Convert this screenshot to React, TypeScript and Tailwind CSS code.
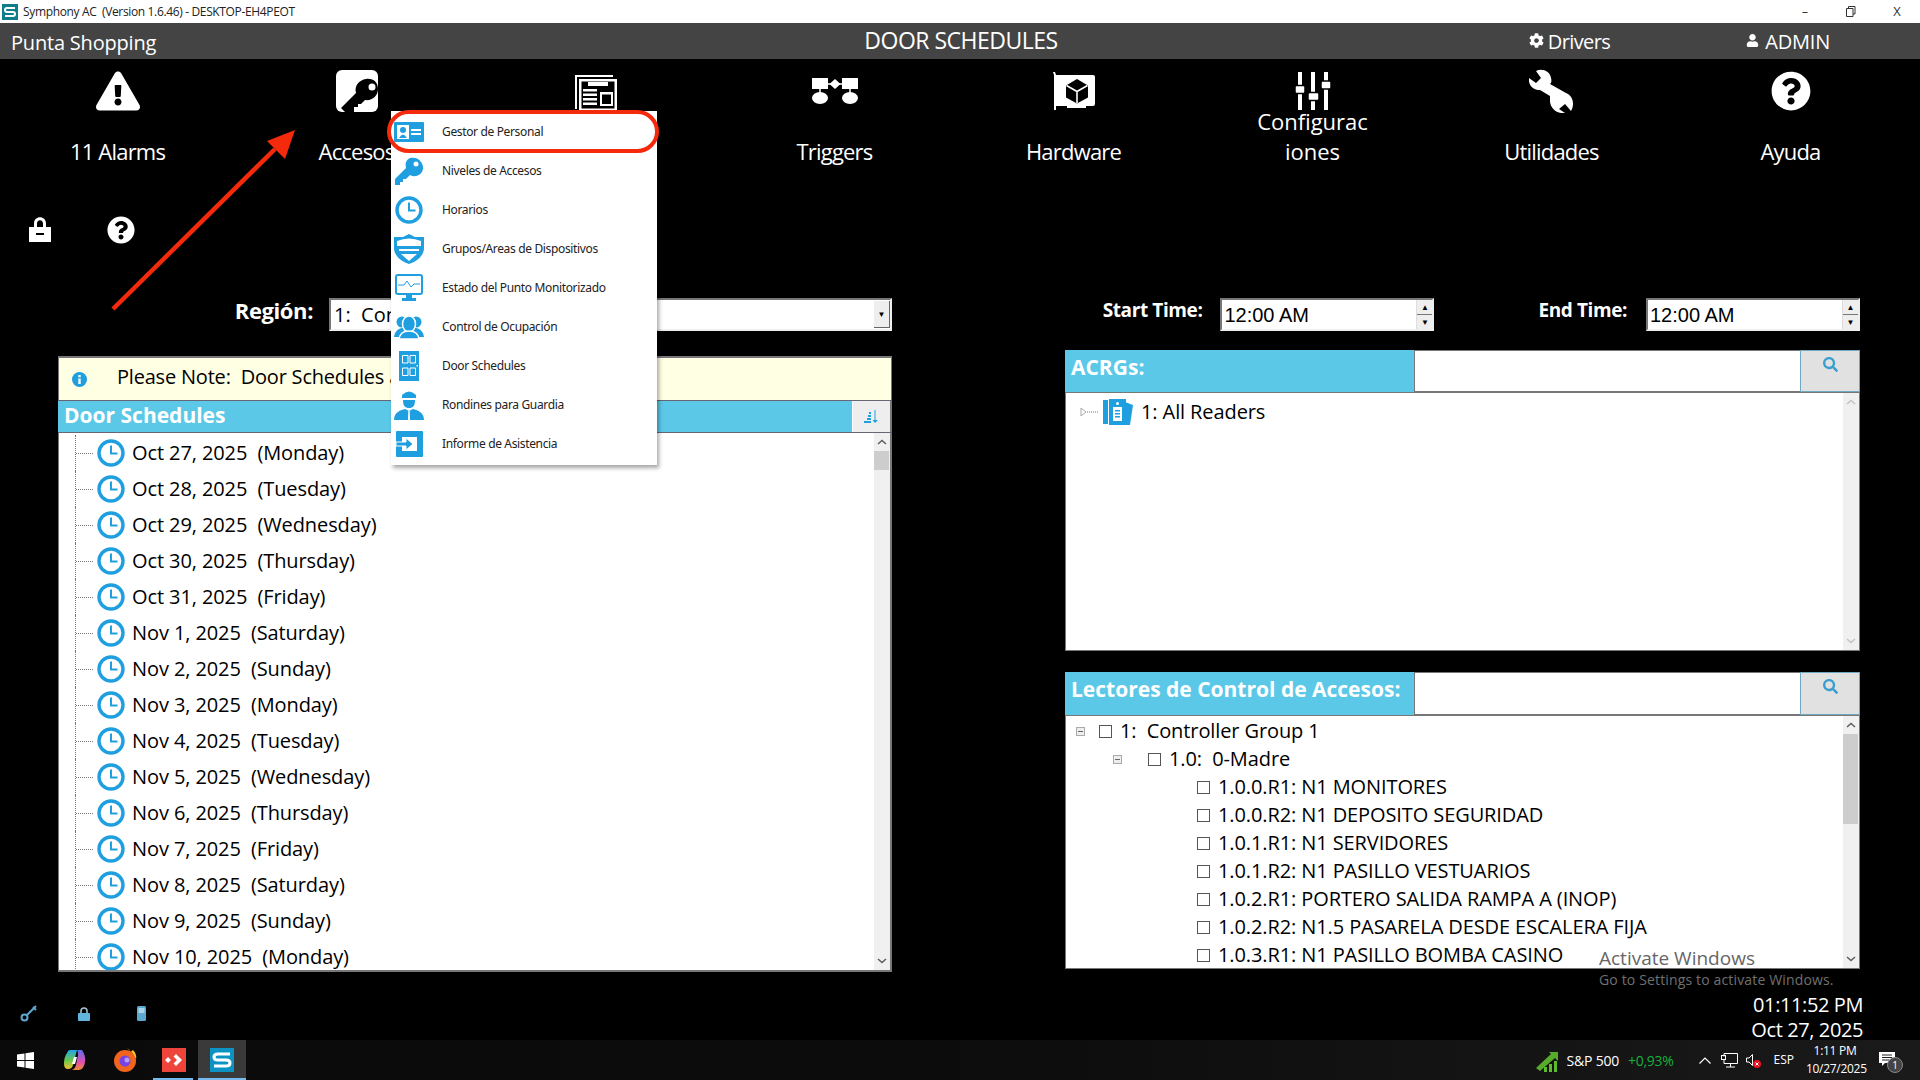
import React from "react";
import { FaExclamationTriangle, FaQuestionCircle, FaCog, FaUser, FaSearch } from "react-icons/fa";

const BLUE = "#1f9fe0";

const scheduleDays = [
  "Oct 27, 2025  (Monday)",
  "Oct 28, 2025  (Tuesday)",
  "Oct 29, 2025  (Wednesday)",
  "Oct 30, 2025  (Thursday)",
  "Oct 31, 2025  (Friday)",
  "Nov 1, 2025  (Saturday)",
  "Nov 2, 2025  (Sunday)",
  "Nov 3, 2025  (Monday)",
  "Nov 4, 2025  (Tuesday)",
  "Nov 5, 2025  (Wednesday)",
  "Nov 6, 2025  (Thursday)",
  "Nov 7, 2025  (Friday)",
  "Nov 8, 2025  (Saturday)",
  "Nov 9, 2025  (Sunday)",
  "Nov 10, 2025  (Monday)",
];

const readers = [
  "1.0.0.R1: N1 MONITORES",
  "1.0.0.R2: N1 DEPOSITO SEGURIDAD",
  "1.0.1.R1: N1 SERVIDORES",
  "1.0.1.R2: N1 PASILLO VESTUARIOS",
  "1.0.2.R1: PORTERO SALIDA RAMPA A (INOP)",
  "1.0.2.R2: N1.5 PASARELA DESDE ESCALERA FIJA",
  "1.0.3.R1: N1 PASILLO BOMBA CASINO",
];

function ClockIcon({ size = 28 }: { size?: number }) {
  return (
    <svg width={size} height={size} viewBox="0 0 28 28" className="shrink-0">
      <circle cx="14" cy="14" r="12" fill="white" stroke={BLUE} strokeWidth="3.4" />
      <path d="M14 6.500V14.500H20.500" fill="none" stroke={BLUE} strokeWidth="2" />
    </svg>
  );
}

function KeyTile() {
  return (
    <svg width="42" height="42" viewBox="0 0 42 42">
      <rect width="42" height="42" rx="6" fill="white" />
      <path d="M30 9C37 8 42 12 42 19C42 26 36 31 29 30L25 34H22V37H18V42H9L5 38L20 23C18 16 23 10 30 9Z" fill="black" />
      <circle cx="36" cy="17" r="3.500" fill="white" />
    </svg>
  );
}

function NewsIcon() {
  return (
    <svg width="42" height="36" viewBox="0 0 42 36" fill="white" className="mt-1">
      <path d="M0 0H38V2H2V34H0Z" />
      <path d="M4 4H42V36H4ZM6.500 6.500V33.500H39.500V6.500Z" fillRule="evenodd" />
      <rect x="13" y="7" width="20" height="4" />
      <rect x="8" y="14" width="14" height="2.500" />
      <rect x="8" y="18.500" width="14" height="2.500" />
      <rect x="8" y="23" width="14" height="2.500" />
      <rect x="8" y="27.500" width="14" height="2.500" />
      <path d="M25 17H38V31H25ZM27 19.500V29H36V19.500Z" fillRule="evenodd" />
    </svg>
  );
}

function TriggerIcon() {
  return (
    <svg width="46" height="26" viewBox="0 0 46 26" fill="white">
      <rect x="0" y="0" width="16" height="11" />
      <rect x="30" y="0" width="16" height="11" />
      <path d="M16 6H30M8 11V15M38 11V15" stroke="white" strokeWidth="1.500" />
      <path d="M23 1L28.500 6L23 11L17.500 6Z" />
      <ellipse cx="8" cy="20" rx="8" ry="6" />
      <ellipse cx="38" cy="20" rx="8" ry="6" />
    </svg>
  );
}

function HardwareIcon() {
  return (
    <svg width="42" height="38" viewBox="0 0 42 38">
      <path d="M0 0H2L3 3H40Q42 3 42 5V32Q42 34 40 34H33V36H14V34H3V38H1V3Z" fill="white" />
      <path d="M24 7L35 13.500V25.500L24 31.500L13 25.500V13.500Z" fill="black" />
      <path d="M13.500 13.500L24 19.500L34.500 13.500M24 19.500V31" fill="none" stroke="white" strokeWidth="1.600" />
    </svg>
  );
}

function SlidersIcon() {
  return (
    <svg width="36" height="38" viewBox="0 0 36 38" fill="white">
      <rect x="3" y="0" width="4" height="38" />
      <rect x="16" y="0" width="4" height="38" />
      <rect x="29" y="0" width="4" height="38" />
      <rect x="0" y="13.500" width="10" height="8" rx="1.500" stroke="black" strokeWidth="1.500" />
      <rect x="13" y="20.500" width="11" height="8" rx="1.500" stroke="black" strokeWidth="1.500" />
      <rect x="26" y="9" width="10" height="8" rx="1.500" stroke="black" strokeWidth="1.500" />
    </svg>
  );
}

function WrenchIcon() {
  return (
    <svg width="45" height="44" viewBox="0 0 45 44" fill="white">
      <path d="M0 9L7 14L12 9L7 2C13 -1 21 2 22 9C23 12 22 14 21 15L37 24C44 27 46 35 42 42L36 35L30 40L36 44C28 45 22 40 21 33L21 27L11 21C4 21 -1 16 0 9Z" />
    </svg>
  );
}

function LockIcon({ width, height }: { width: number; height: number }) {
  return (
    <svg width={width} height={height} viewBox="0 0 22 26" fill="white">
      <path d="M5 11V7.500C5 -1 17 -1 17 7.500V11H14V7.500C14 3 8 3 8 7.500V11Z" />
      <path d="M0 11H22V26H0ZM7 17V19H15V17Z" fillRule="evenodd" />
    </svg>
  );
}

const navItems: { id: string; label: string; icon: React.ReactNode; wrap?: boolean }[] = [
  { id: "alarms", label: "11 Alarms", icon: <FaExclamationTriangle size={44} color="white" /> },
  { id: "access", label: "Accesos", icon: <KeyTile /> },
  { id: "reports", label: "", icon: <NewsIcon /> },
  { id: "triggers", label: "Triggers", icon: <TriggerIcon /> },
  { id: "hardware", label: "Hardware", icon: <HardwareIcon /> },
  { id: "config", label: "Configuraciones", icon: <SlidersIcon />, wrap: true },
  { id: "utils", label: "Utilidades", icon: <WrenchIcon /> },
  { id: "help", label: "Ayuda", icon: <FaQuestionCircle size={40} color="white" /> },
];

const menuItems: { label: string; icon: React.ReactNode }[] = [
  {
    label: "Gestor de Personal",
    icon: (
      <svg width="30" height="20" viewBox="0 0 30 20">
        <rect width="30" height="20" rx="1" fill={BLUE} />
        <rect x="3" y="3" width="12" height="14" fill="white" />
        <circle cx="9" cy="8" r="3" fill={BLUE} />
        <path d="M5 16Q9 9 13 16Z" fill={BLUE} />
        <rect x="17" y="7" width="10" height="2" fill="white" />
        <rect x="17" y="11" width="10" height="2" fill="white" />
      </svg>
    ),
  },
  {
    label: "Niveles de Accesos",
    icon: (
      <svg width="30" height="28" viewBox="0 0 30 28">
        <path d="M16 1C24 -1 30 6 29 12C28 18 21 21 16 18L12 22H9V25H6V28H1V22L12 11C11 6 12 3 16 1Z" fill={BLUE} />
        <circle cx="22" cy="7" r="2.500" fill="white" />
      </svg>
    ),
  },
  { label: "Horarios", icon: <ClockIcon /> },
  {
    label: "Grupos/Areas de Dispositivos",
    icon: (
      <svg width="30" height="30" viewBox="0 0 30 30">
        <path d="M15 0L21 3H30V14C30 22 22 28 15 30C8 28 0 22 0 14V3H9Z" fill={BLUE} />
        <path d="M3 7Q15 2 27 7V12H3Z" fill="white" />
        <path d="M5 15H25V17H5Z M7 20H23L15 27Z" fill="white" />
      </svg>
    ),
  },
  {
    label: "Estado del Punto Monitorizado",
    icon: (
      <svg width="28" height="27" viewBox="0 0 28 27">
        <rect x="1" y="1" width="26" height="19" rx="2" fill="white" stroke={BLUE} strokeWidth="2" />
        <path d="M3 11H9L12 7L16 13L19 10H25" fill="none" stroke={BLUE} strokeWidth="1" />
        <path d="M11 20H17V24H21V27H7V24H11Z" fill={BLUE} />
      </svg>
    ),
  },
  {
    label: "Control de Ocupación",
    icon: (
      <svg width="30" height="24" viewBox="0 0 30 24" fill={BLUE}>
        <circle cx="8" cy="7" r="5.500" />
        <circle cx="22" cy="7" r="5.500" />
        <path d="M0 22C1 14 7 13 9 13H21C23 13 29 14 30 22Z" />
        <ellipse cx="15" cy="9" rx="6.500" ry="8" stroke="white" strokeWidth="1.500" />
        <path d="M5 24C6 17 11 16 15 16C19 16 24 17 25 24Z" stroke="white" strokeWidth="1.500" />
      </svg>
    ),
  },
  {
    label: "Door Schedules",
    icon: (
      <svg width="20" height="30" viewBox="0 0 20 30">
        <rect width="20" height="30" fill={BLUE} />
        <path d="M3.500 4.500H9V12H3.500ZM11 4.500H16.500V12H11ZM3.500 17H9V24.500H3.500ZM11 17H16.500V24.500H11Z" fill="none" stroke="white" strokeWidth="1" />
        <rect x="17.500" y="14" width="1.500" height="1.500" fill="white" />
      </svg>
    ),
  },
  {
    label: "Rondines para Guardia",
    icon: (
      <svg width="30" height="30" viewBox="0 0 30 30" fill={BLUE}>
        <path d="M8 5Q15 -2 22 5V8H8Z" />
        <path d="M9 10H21C21 16 19 18 15 18C11 18 9 16 9 10Z" />
        <path d="M0 30C0 22 7 20 11 19L15 21L19 19C23 20 30 22 30 30Z" />
        <path d="M14.300 21H15.700L16 30H14Z" fill="white" />
      </svg>
    ),
  },
  {
    label: "Informe de Asistencia",
    icon: (
      <svg width="27" height="26" viewBox="0 0 27 26">
        <rect width="27" height="26" rx="1" fill={BLUE} />
        <rect x="6" y="6" width="15" height="14" fill="white" />
        <path d="M0 11H10V7L17 13L10 19V15H0Z" fill={BLUE} stroke="white" strokeWidth="1" />
      </svg>
    ),
  },
];

function UpChevron({ className = "" }: { className?: string }) {
  return (
    <svg width="10" height="6" viewBox="0 0 10 6" className={className}>
      <path d="M1 5L5 1.500L9 5" fill="none" stroke="#606060" strokeWidth="1.600" />
    </svg>
  );
}

function Scrollbar({ thumbTop, thumbHeight, faded }: { thumbTop: string; thumbHeight: string; faded?: boolean }) {
  return (
    <div className="w-4 shrink-0 bg-[#f0f0f0] flex flex-col items-center justify-between py-1.5 relative">
      <UpChevron className={faded ? "opacity-30" : ""} />
      <div className={`absolute left-0 w-[15px] bg-[#cdcdcd] ${thumbTop} ${thumbHeight}`} />
      <UpChevron className={`rotate-180 ${faded ? "opacity-30" : ""}`} />
    </div>
  );
}

function SearchHeader({ title, h }: { title: string; h: string }) {
  return (
    <div className={`flex shrink-0 ${h}`}>
      <div className="w-[349px] bg-[#5bc8e8] text-white font-bold text-[21px] leading-[34px] pl-1.5 whitespace-nowrap">{title}</div>
      <div className="flex-1 bg-white border-t border-b border-l border-[#777]" />
      <div className="w-[60px] bg-[#e1e1e1] border border-[#6fa8c0] flex justify-center pt-1.5">
        <FaSearch size={15} color="#3a9fd0" />
      </div>
    </div>
  );
}

function Expander() {
  return (
    <span className="w-[9px] h-[9px] bg-[#eee] border border-[#aaa] flex items-center justify-center shrink-0">
      <span className="w-[5px] h-px bg-[#666]" />
    </span>
  );
}

function Check() {
  return <span className="block w-[13px] h-[13px] border border-[#555] bg-white shrink-0" />;
}

function TimeInput() {
  return (
    <div className="w-[214px] h-[33px] bg-white border-2 border-t-[#777] border-l-[#777] border-r-[#eee] border-b-[#eee] flex items-center justify-between">
      <span className="pl-[2px] text-[20px] text-black font-['Liberation_Sans',sans-serif]">12:00 AM</span>
      <div className="w-4 h-full flex flex-col bg-[#eee] border-l border-[#ddd]">
        <div className="flex-1 flex items-center justify-center border-b border-[#777] text-[8px] leading-none text-black">▲</div>
        <div className="flex-1 flex items-center justify-center text-[8px] leading-none text-black">▼</div>
      </div>
    </div>
  );
}

export default function App() {
  return (
    <div className="relative w-[1920px] h-[1080px] overflow-hidden bg-black flex flex-col font-['Open_Sans','Noto_Sans',sans-serif]">
      {/* Title bar */}
      <div className="h-[23px] shrink-0 bg-white flex items-center text-[12px] text-[#222] whitespace-pre">
        <svg width="16" height="16" viewBox="0 0 16 16" className="ml-[2px] mr-[5px]">
          <rect width="16" height="16" fill="#0f7d8c" />
          <path d="M13 4H5Q3 4 3 6T5 8H11Q13 8 13 10T11 12H3" fill="none" stroke="white" strokeWidth="2" />
        </svg>
        <span className="tracking-[-0.35px]">Symphony AC  (Version 1.6.46) - DESKTOP-EH4PEOT</span>
        <div className="ml-auto flex items-center text-[#333]">
          <span className="w-[46px] text-center">–</span>
          <svg width="10" height="11" viewBox="0 0 10 11" className="mx-[18px]">
            <path d="M2.500 2.500V.5H9V8H7M.5 2.500H7V10.500H.5Z" fill="none" stroke="#333" />
          </svg>
          <span className="w-[46px] text-center text-[13px]">X</span>
        </div>
      </div>

      {/* App header */}
      <div className="h-9 shrink-0 bg-[#444] text-white text-[20px] grid grid-cols-3 items-center">
        <span className="pl-[11px] tracking-[-0.2px] mt-[3px]">Punta Shopping</span>
        <span className="text-center text-[23px] tracking-[-0.5px] -mt-[1px] pl-[2px]">DOOR SCHEDULES</span>
        <div className="flex justify-end items-center pr-[90px] text-[20px] tracking-[-0.6px] mt-[2px]">
          <FaCog size={15} className="mr-1 -mt-1" />
          <span>Drivers</span>
          <FaUser size={13} className="ml-[136px] mr-1.5 -mt-1" />
          <span className="tracking-[-0.2px]">ADMIN</span>
        </div>
      </div>

      {/* Main nav */}
      <div className="h-[130px] shrink-0 -ml-0.5 grid grid-cols-[repeat(8,239px)] text-white">
        {navItems.map((item) => (
          <div key={item.id} className="flex flex-col items-center pt-[11px]">
            <div className="h-[42px] flex items-center justify-center">{item.icon}</div>
            <div className={`h-[60px] -mt-[6px] flex items-end justify-center text-center text-[22px] leading-[30px] ${item.wrap ? "w-[114px] break-all" : "whitespace-nowrap tracking-[-0.8px]"}`}>
              <span>{item.label}</span>
            </div>
          </div>
        ))}
      </div>

      <div className="h-[109px] shrink-0 pl-[29px] pt-[27px] flex items-start">
        <LockIcon width={22} height={26} />
        <FaQuestionCircle size={28} color="white" className="ml-[56px]" />
      </div>

      {/* Panels */}
      <div className="flex pl-[58px] gap-[173px] shrink-0">
        <div className="w-[834px] flex flex-col">
          <div className="h-[33px] flex items-center justify-end">
            <span className="text-white font-bold text-[22px] mr-4 -mt-2 tracking-[-0.4px]">Región:</span>
            <div className="w-[563px] h-[33px] bg-white border-2 border-t-[#777] border-l-[#777] border-r-[#eee] border-b-[#eee] flex items-center justify-between">
              <span className="pl-[3px] text-[20px] text-black whitespace-pre">1:  Controller Group 1</span>
              <div className="w-4 h-[27px] bg-[#eee] border-r border-b border-[#666] flex items-center justify-center text-[8px] text-black">▼</div>
            </div>
          </div>
          <div className="mt-[25px] h-[616px] flex flex-col">
            <div className="h-[44px] shrink-0 bg-[#ffffe4] border-t-2 border-x border-[#777] flex items-center whitespace-pre text-[20px] text-black tracking-[-0.2px]">
              <svg width="15" height="15" viewBox="0 0 15 15" className="ml-[13px] mr-[30px]">
                <circle cx="7.500" cy="7.500" r="7.500" fill={BLUE} />
                <rect x="6.300" y="6.500" width="2.400" height="5.500" fill="white" />
                <rect x="6.300" y="3" width="2.400" height="2.200" fill="white" />
              </svg>
              <span className="-mt-1">Please Note:  Door Schedules are</span>
            </div>
            <div className="h-[33px] shrink-0 flex bg-[#5bc8e8] border-t border-b border-[#667]">
              <span className="flex-1 pl-[6px] text-white font-bold text-[21px] leading-[28px]">Door Schedules</span>
              <div className="w-10 bg-[#eee] border-l border-r-2 border-l-white border-r-[#777] flex items-center justify-center">
                <svg width="15" height="14" viewBox="0 0 15 14" fill={BLUE}>
                  <path d="M5 2H7V4H5ZM4 5H7V7H4ZM3 8H7V10H3ZM0 11H7V13H0Z" />
                  <path d="M10.500 0H11.500V10H14L11 13L8.500 10H10.500Z" />
                </svg>
              </div>
            </div>
            <div className="flex-1 min-h-0 flex bg-white border-b-2 border-l border-r-2 border-[#777] overflow-hidden">
              <div className="flex-1 flex flex-col pt-[2px]">
                {scheduleDays.map((day) => (
                  <div key={day} className="h-9 shrink-0 flex items-center whitespace-pre text-[20px] text-black tracking-[-0.1px]">
                    <span className="ml-4 h-full border-l border-dotted border-[#777]" />
                    <span className="w-[17px] border-t border-dotted border-[#777]" />
                    <span className="ml-[4px] mr-[7px]"><ClockIcon /></span>
                    <span>{day}</span>
                  </div>
                ))}
              </div>
              <Scrollbar thumbTop="top-[18px]" thumbHeight="h-[19px]" />
            </div>
          </div>
        </div>

        <div className="w-[795px] flex flex-col">
          <div className="h-[33px] flex items-center">
            <span className="ml-auto text-white font-bold text-[19px] mr-[18px] -mt-2 tracking-[-0.4px]">Start Time:</span>
            <TimeInput />
            <span className="ml-[104px] text-white font-bold text-[19px] mr-[19px] -mt-2 tracking-[-0.4px]">End Time:</span>
            <TimeInput />
          </div>
          <div className="mt-[19px] h-[301px] flex flex-col">
            <SearchHeader title="ACRGs:" h="h-[42px]" />
            <div className="flex-1 flex bg-white border border-[#777]">
              <div className="flex-1 h-10 flex items-center text-[20px] text-black tracking-[-0.1px] -mt-[1px]">
                <svg width="18" height="10" viewBox="0 0 18 10" className="ml-[14px]">
                  <path d="M1 1L6 5L1 9Z" fill="white" stroke="#aaa" />
                  <path d="M7 5H18" stroke="#777" strokeDasharray="1 1" />
                </svg>
                <svg width="30" height="27" viewBox="0 0 30 27" className="ml-[5px] mr-2">
                  <path d="M22 3L30 6L27 26H22Z" fill={BLUE} />
                  <rect x="0" y="1" width="5" height="24" fill={BLUE} />
                  <rect x="6" y="0" width="17" height="26" fill={BLUE} />
                  <rect x="10" y="8" width="9" height="14" fill="white" />
                  <rect x="12" y="11" width="5" height="1.500" fill={BLUE} />
                  <rect x="12" y="14" width="5" height="1.500" fill={BLUE} />
                  <rect x="12" y="17" width="5" height="1.500" fill={BLUE} />
                  <circle cx="14.500" cy="4.500" r="1.500" fill="white" />
                </svg>
                <span>1: All Readers</span>
              </div>
              <Scrollbar thumbTop="top-0" thumbHeight="h-0" faded />
            </div>
          </div>
          <div className="mt-[21px] h-[297px] flex flex-col">
            <SearchHeader title="Lectores de Control de Accesos:" h="h-[43px]" />
            <div className="flex-1 flex bg-white border border-[#777] overflow-hidden">
              <div className="flex-1 flex flex-col pt-[1px] text-[20px] text-black whitespace-pre tracking-[-0.1px]">
                <div className="h-7 shrink-0 flex items-center pl-[10px]">
                  <Expander />
                  <span className="ml-[14px] mr-2"><Check /></span>
                  <span>1:  Controller Group 1</span>
                </div>
                <div className="h-7 shrink-0 flex items-center pl-[47px]">
                  <Expander />
                  <span className="ml-[26px] mr-2"><Check /></span>
                  <span>1.0:  0-Madre</span>
                </div>
                {readers.map((reader) => (
                  <div key={reader} className="h-7 shrink-0 flex items-center pl-[131px]">
                    <span className="mr-2"><Check /></span>
                    <span>{reader}</span>
                  </div>
                ))}
              </div>
              <Scrollbar thumbTop="top-[18px]" thumbHeight="h-[90px]" />
            </div>
          </div>
        </div>
      </div>

      {/* Status row */}
      <div className="flex-1 min-h-0 flex items-start relative">
        <div className="mt-[33px] ml-5 flex items-center">
          <svg width="17" height="17" viewBox="0 0 17 17">
            <circle cx="4.500" cy="12.500" r="3" fill="none" stroke="#5ba9d0" strokeWidth="2" />
            <path d="M7 10L16 1M13 2L16 5" fill="none" stroke="#5ba9d0" strokeWidth="2" />
          </svg>
          <svg width="12" height="14" viewBox="0 0 12 14" className="ml-[41px]">
            <path d="M3 6V4C3 0 9 0 9 4V6" fill="none" stroke="#a8c8d8" strokeWidth="1.500" />
            <rect y="6" width="12" height="8" rx="1" fill="#62b4dc" />
          </svg>
          <svg width="9" height="15" viewBox="0 0 9 15" className="ml-[47px]">
            <rect width="9" height="15" rx="1.500" fill="#5ba9d0" />
            <rect x="1.500" y="2" width="6" height="5" fill="#a8d4ea" />
          </svg>
        </div>
        <div className="ml-auto pr-[57px] pt-[20px] text-right text-white text-[20px] leading-[25px] tracking-[-0.4px] h-0">
          <div>01:11:52 PM</div>
          <div>Oct 27, 2025</div>
        </div>
      </div>

      {/* Taskbar */}
      <div className="h-10 shrink-0 flex items-stretch bg-gradient-to-r from-[#0a0a0a] via-[#0c0c0c] to-[#1a1a1a] text-white relative">
        <div className="w-[50px] flex items-center justify-center">
          <svg width="17" height="17" viewBox="0 0 17 17" fill="white">
            <path d="M0 2.500L7.500 1.500V8H0ZM8.500 1.300L17 0V8H8.500ZM0 9H7.500V15.500L0 14.500ZM8.500 9H17V17L8.500 15.700Z" />
          </svg>
        </div>
        <div className="w-[50px] flex items-center justify-center">
          <svg width="22" height="22" viewBox="0 0 22 22">
            <defs>
              <linearGradient id="cp" x1="0" y1="0" x2="0" y2="1">
                <stop offset="0" stopColor="#21a7e8" />
                <stop offset="0.55" stopColor="#6cc84a" />
                <stop offset="1" stopColor="#f5c030" />
              </linearGradient>
              <linearGradient id="cp2" x1="0" y1="0" x2="0" y2="1">
                <stop offset="0" stopColor="#5b6ff0" />
                <stop offset="0.6" stopColor="#e04fb0" />
                <stop offset="1" stopColor="#f28a30" />
              </linearGradient>
            </defs>
            <path d="M6 1H13L9 16Q8 20 4 20Q0 20 0 15Q0 8 3 4Q4 1 6 1Z" fill="url(#cp)" />
            <path d="M13 1Q16 1 18 1Q22 7 21 13Q20 20 15 21H8Q11 20 12 16L14 6Q14 2 13 1Z" fill="url(#cp2)" />
            <path d="M10 8H13L11 15H8Z" fill="white" />
          </svg>
        </div>
        <div className="w-[49px] flex items-center justify-center">
          <svg width="24" height="24" viewBox="0 0 24 24">
            <circle cx="12" cy="13" r="11" fill="#f0641e" />
            <path d="M14 0Q20 4 23 11Q24 6 20 2Q18 5 14 0Z" fill="#ffc32a" />
            <circle cx="12" cy="13" r="5.500" fill="#7542e5" />
            <circle cx="14" cy="12" r="2.500" fill="#b79bf0" />
          </svg>
        </div>
        <div className="w-[49px] flex items-center justify-center relative">
          <svg width="24" height="24" viewBox="0 0 24 24">
            <rect width="24" height="24" fill="#ef443b" />
            <path d="M6 9L9 12L6 15L3 12Z M14 6L20 12L14 18L11.500 15.500L15 12L11.500 8.500Z" fill="white" />
          </svg>
          <span className="absolute bottom-0 left-1 right-[5px] h-0.5 bg-[#76b9ed]" />
        </div>
        <div className="w-12 flex items-center justify-center bg-[#3a3a3a] relative">
          <svg width="24" height="24" viewBox="0 0 24 24">
            <rect width="24" height="24" fill="#0c93c4" />
            <path d="M20 6H8Q4 6 4 9T8 12H16Q20 12 20 15T16 18H4" fill="none" stroke="white" strokeWidth="3" />
          </svg>
          <span className="absolute bottom-0 inset-x-0 h-0.5 bg-[#76b9ed]" />
        </div>

        <div className="ml-auto flex items-center text-[14px] whitespace-nowrap">
          <svg width="24" height="24" viewBox="0 0 24 24" className="mr-2">
            <path d="M1 20L16 6L14 4H23V13L20 10L5 23Z" fill="#5dbb2e" opacity="0.9" />
            <rect x="9" y="19" width="3" height="5" fill="#5dbb2e" />
            <rect x="14" y="16" width="3" height="8" fill="#5dbb2e" />
            <rect x="19" y="13" width="3" height="11" fill="#5dbb2e" />
          </svg>
          <span className="tracking-[-0.2px]">S&amp;P 500</span>
          <span className="ml-[9px] text-[#16b13c] tracking-[-0.3px]">+0,93%</span>
          <svg width="12" height="7" viewBox="0 0 12 7" className="ml-[25px]">
            <path d="M.5 6.500L6 1L11.500 6.500" fill="none" stroke="white" strokeWidth="1.200" />
          </svg>
          <svg width="17" height="15" viewBox="0 0 17 15" className="ml-[10px]">
            <path d="M3 3.500V.5H16.500V10.500H3V7M9.500 10.500V14M5 14H14" fill="none" stroke="white" />
            <rect x=".5" y="2.500" width="4" height="4" fill="none" stroke="white" />
          </svg>
          <svg width="15" height="15" viewBox="0 0 15 15" className="ml-2">
            <path d="M.5 5H3L6.500 1.500V12.500L3 9H.5Z" fill="none" stroke="white" />
            <circle cx="11" cy="11" r="4" fill="#e81123" />
            <path d="M9.500 9.500L12.500 12.500M12.500 9.500L9.500 12.500" stroke="white" />
          </svg>
          <span className="ml-[13px] text-[12px]">ESP</span>
          <div className="ml-[12px] w-[58px] text-center text-[12px] leading-[18px] tracking-[-0.3px]">
            <div>1:11 PM</div>
            <div>10/27/2025</div>
          </div>
          <div className="ml-[15px] mr-[25px] relative w-4 h-4">
            <svg width="16" height="15" viewBox="0 0 16 15">
              <path d="M0 0H16V11H6L3 14V11H0Z" fill="white" />
              <path d="M3 3H13M3 5.500H13M3 8H10" stroke="#222" />
            </svg>
            <span className="absolute -right-2 top-[5px] w-4 h-4 rounded-full bg-[#444] border border-[#888] flex items-center justify-center text-[10px] leading-none">1</span>
          </div>
        </div>
      </div>

      {/* Access dropdown */}
      <div className="absolute left-[391px] top-[111px] w-[266px] bg-white shadow-[2px_3px_4px_rgba(0,0,0,0.35)] pt-[1px] pb-[2px] z-20">
        {menuItems.map((item) => (
          <div key={item.label} className="h-[39px] flex items-center text-[12px] text-[#222] font-['Noto_Sans',sans-serif] tracking-[-0.35px]">
            <div className="w-[36px] flex justify-center">{item.icon}</div>
            <span className="ml-[15px]">{item.label}</span>
          </div>
        ))}
      </div>
      <div className="absolute left-[387px] top-[110px] w-[272px] h-[43px] rounded-full border-[4px] border-[#f52a0c] z-30" />

      {/* Red annotation arrow */}
      <svg width="200" height="200" viewBox="0 0 200 200" className="absolute left-[105px] top-[125px] z-30">
        <path d="M8 184L170 24" stroke="#f52a0c" strokeWidth="4.500" />
        <path d="M190 5L180 34L162 16Z" fill="#f52a0c" />
      </svg>

      {/* Windows watermark */}
      <div className="absolute left-[1599px] top-[945px] z-10 text-[#666] pointer-events-none whitespace-nowrap">
        <div className="text-[19px] leading-[26px]">Activate Windows</div>
        <div className="text-[14px] leading-[18px] tracking-[0.15px] text-[#707070]">Go to Settings to activate Windows.</div>
      </div>
    </div>
  );
}
